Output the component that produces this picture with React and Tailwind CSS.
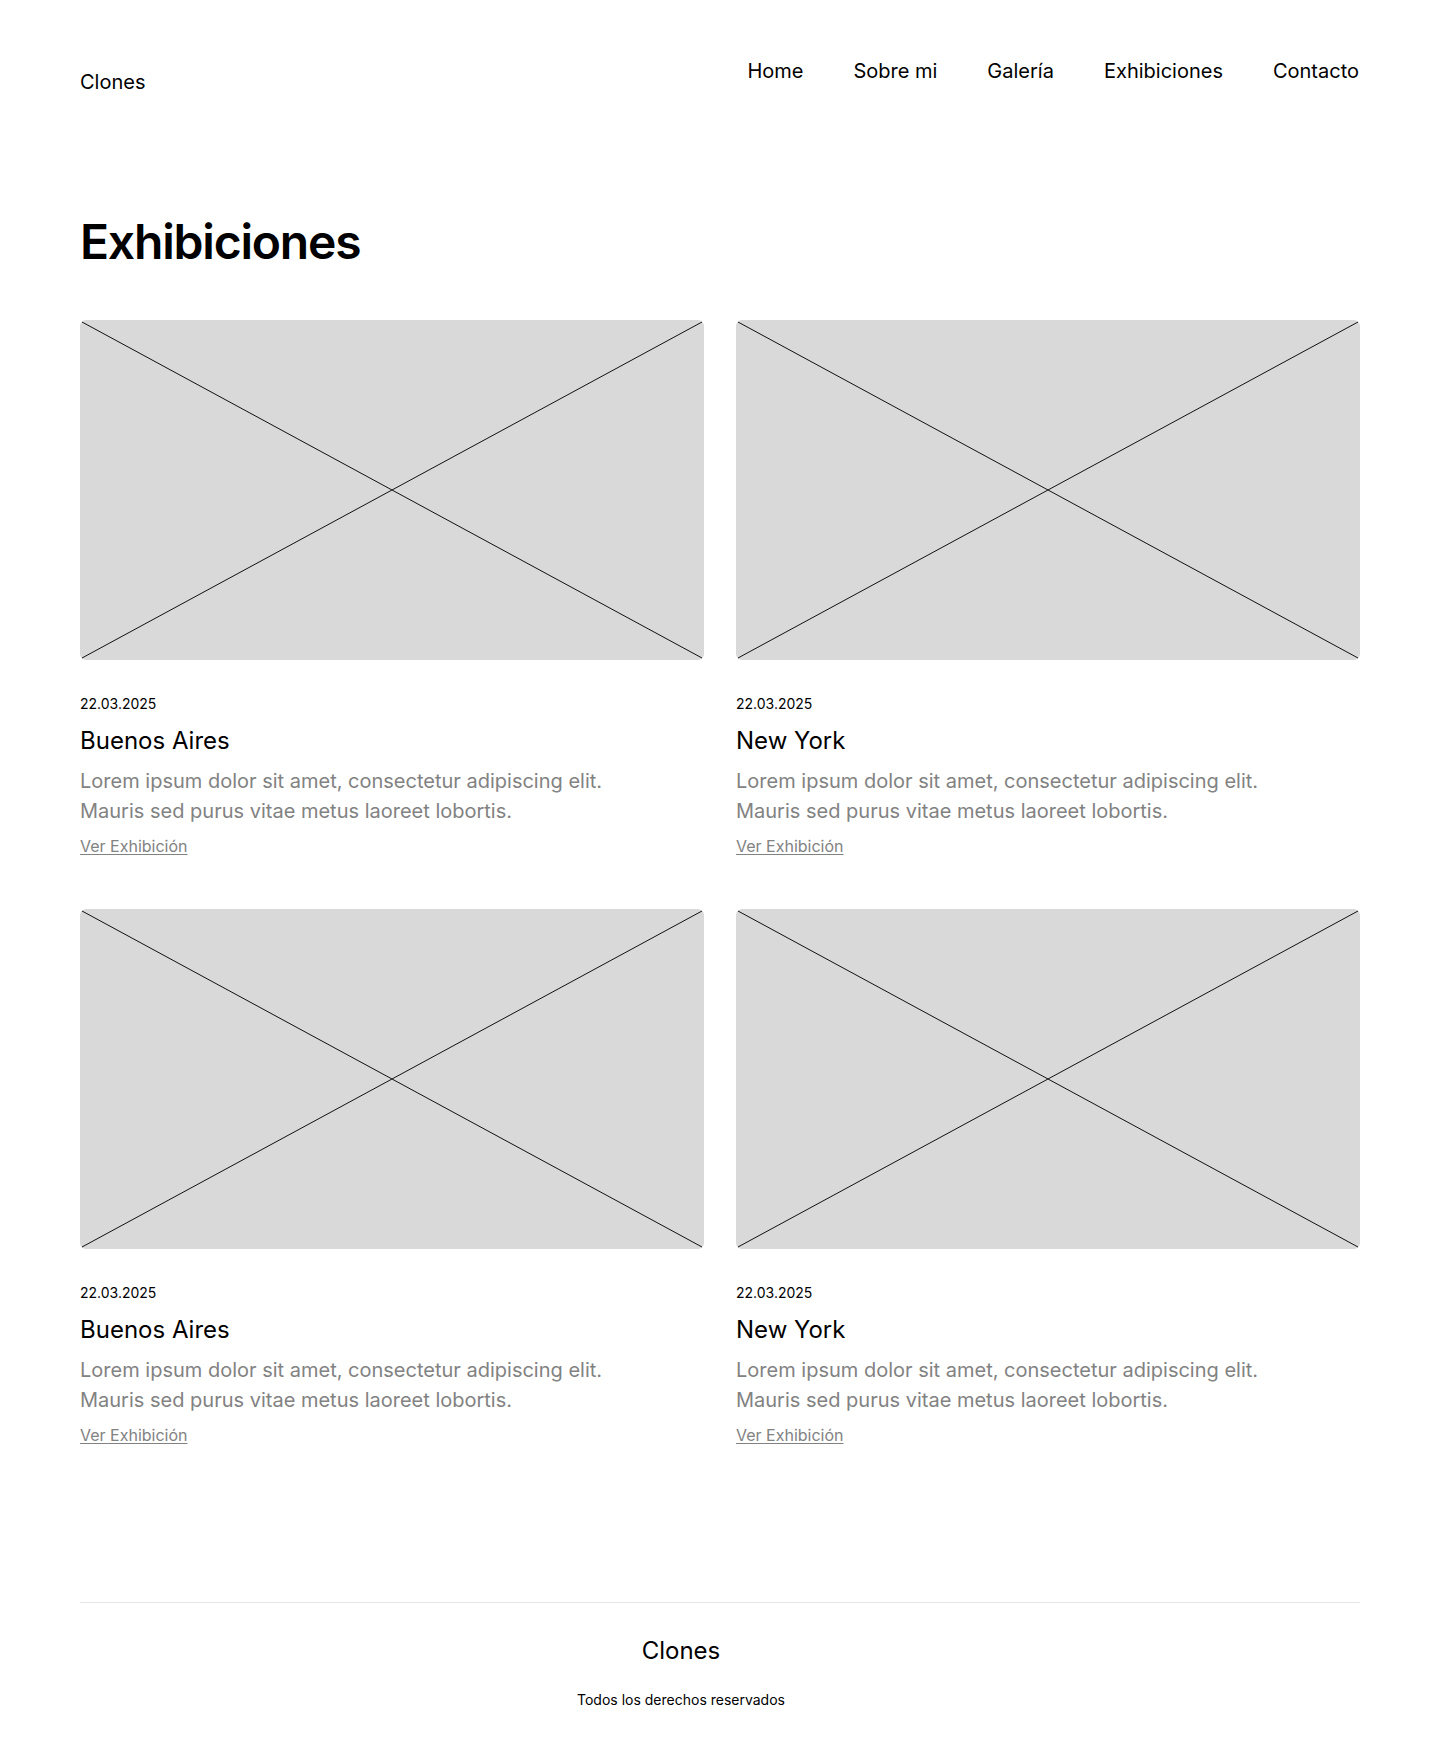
const exhibitions = [
  { date: '22.03.2025', city: 'Buenos Aires' },
  { date: '22.03.2025', city: 'New York' },
  { date: '22.03.2025', city: 'Buenos Aires' },
  { date: '22.03.2025', city: 'New York' },
];

const navLinks = ['Home', 'Sobre mi', 'Galería', 'Exhibiciones', 'Contacto'];

function Placeholder() {
  return (
    <div className="relative h-[340px] w-full overflow-hidden rounded-md bg-[#d9d9d9]">
      <svg
        className="absolute inset-0 h-full w-full"
        viewBox="0 0 624 340"
        preserveAspectRatio="none"
      >
        <line x1="2" y1="2" x2="622" y2="338" stroke="#111" strokeWidth="1" vectorEffect="non-scaling-stroke" />
        <line x1="2" y1="338" x2="622" y2="2" stroke="#111" strokeWidth="1" vectorEffect="non-scaling-stroke" />
      </svg>
    </div>
  );
}

function ExhibitionCard({ exhibition }) {
  return (
    <article className="flex flex-col">
      <Placeholder />
      <p className="mt-[34px] text-sm leading-5 text-black">{exhibition.date}</p>
      <h2 className="mt-[11px] text-2xl leading-8 text-black">{exhibition.city}</h2>
      <p className="mt-[9px] text-xl leading-[30px] text-[#828282]">
        Lorem ipsum dolor sit amet, consectetur adipiscing elit.
        <br />
        Mauris sed purus vitae metus laoreet lobortis.
      </p>
      <a href="#" className="mt-[8px] self-start text-base leading-6 text-[#828282] underline underline-offset-2">
        Ver Exhibición
      </a>
    </article>
  );
}

export default function App() {
  return (
    <div className="min-h-[1754px] bg-white font-['Inter',sans-serif] text-black">
      <div className="mx-auto w-[1280px]">
        {/* Header */}
        <header className="flex items-start justify-between pt-[57px]">
          <a href="#" className="mt-[11px] text-xl leading-7">Clones</a>
          <nav className="mr-px flex gap-[50px]">
            {navLinks.map((link) => (
              <a key={link} href="#" className="text-xl leading-7">
                {link}
              </a>
            ))}
          </nav>
        </header>

        {/* Exhibitions */}
        <main className="pt-[122px]">
          <h1 className="text-5xl leading-none font-semibold tracking-tight">Exhibiciones</h1>
          <div className="mt-[54px] grid grid-cols-2 gap-x-8 gap-y-[51px]">
            {exhibitions.map((exhibition, i) => (
              <ExhibitionCard key={i} exhibition={exhibition} />
            ))}
          </div>
        </main>

        {/* Footer */}
        <footer className="mt-[155px] border-t border-[#e6e6e6] pt-[32px] pr-[78px] pb-[52px] text-center">
          <p className="text-2xl leading-8">Clones</p>
          <p className="mt-[23px] text-sm leading-5">Todos los derechos reservados</p>
        </footer>
      </div>
    </div>
  );
}
